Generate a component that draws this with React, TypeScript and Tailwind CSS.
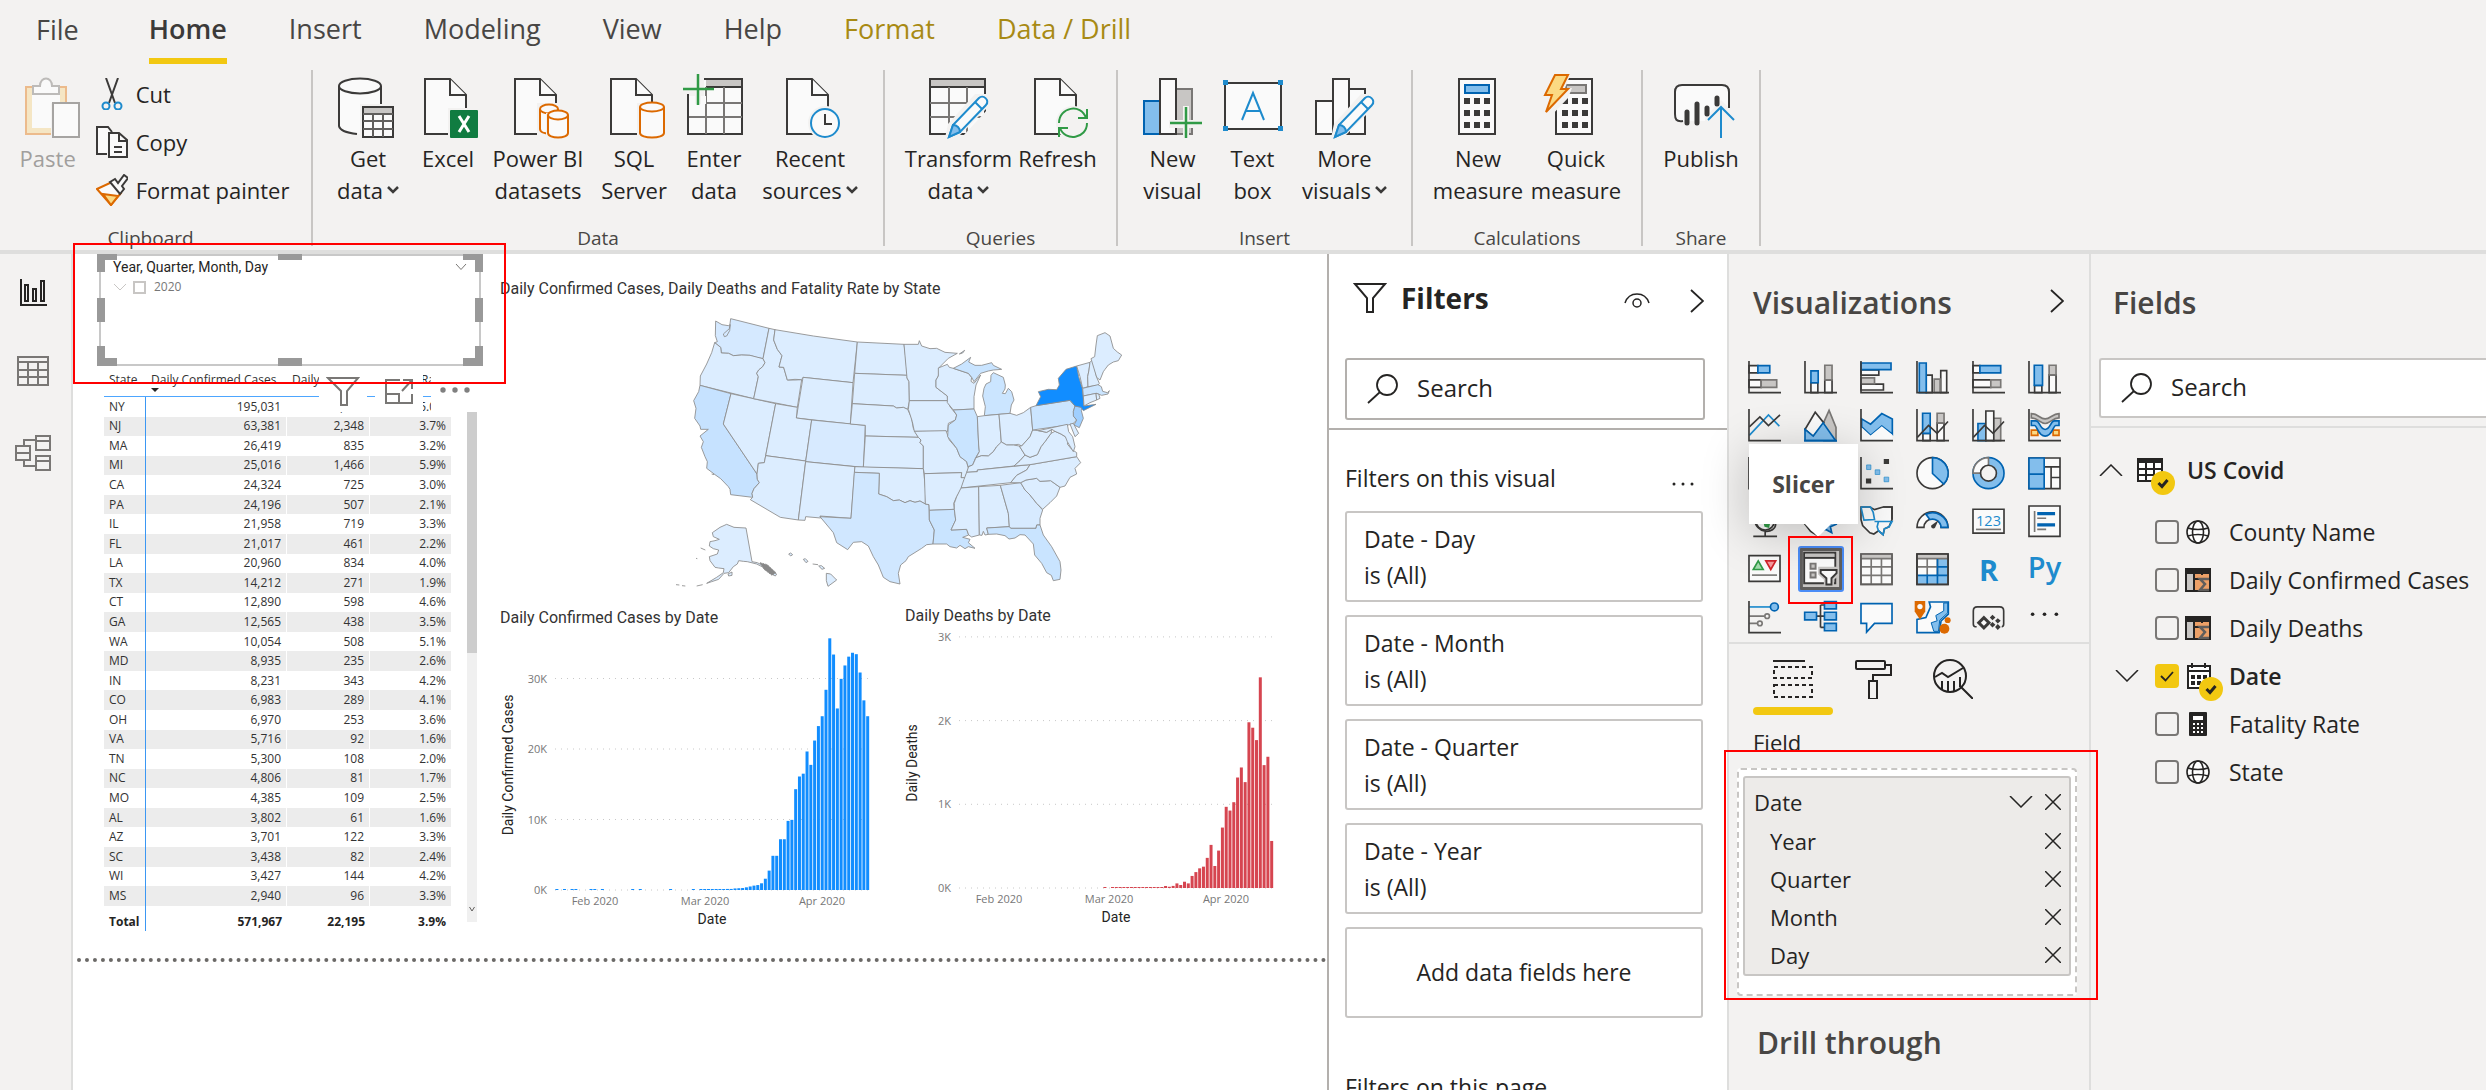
import { type ReactNode } from "react";

const DARK = "#3b3a39";
const PAPER = "#fafafa";
const GREY = "#797775";
const SILVER = "#c8c6c4";
const BLUE = "#0063b1";
const SKY = "#83beec";
const AZURE = "#1e8bcd";
const ORANGE = "#dc6900";
const GREEN = "#309a46";

/* ---------- ribbon icons, drawn on a 60 x 60 grid ---------- */

function Big({ children }: { children: ReactNode }) {
  return (
    <svg viewBox="0 0 60 60" className="size-[60px] shrink-0 overflow-visible" fill="none" strokeWidth="2" aria-hidden="true">
      {children}
    </svg>
  );
}

const Page = () => (
  <g fill={PAPER} stroke={DARK}>
    <path d="M7 1H32L48 17V56H7Z" />
    <path d="M32 1V17H48" />
  </g>
);

const PasteIcon = () => (
  <Big>
    <path d="M4 9H44V56H4Z" fill="#f5e6c4" stroke="#ecbb8c" />
    <path d="M10 14H38V50H10Z" fill={PAPER} />
    <path d="M11 16V8H18C18 -2 30 -2 30 8H37V16Z" fill={PAPER} stroke="#bdbbb9" />
    <path d="M29 25H57V60H29Z" fill="#f3f2f1" />
    <path d="M31 25H57V59H31Z" fill={PAPER} stroke="#a6a4a2" />
  </Big>
);

const GetDataIcon = () => (
  <Big>
    <path d="M1 8V48C1 53 10 56 22 56H42V8" fill={PAPER} />
    <path d="M1 8V48C2 53 10 55 19 56M43 8V26" stroke={DARK} />
    <ellipse cx="22" cy="8" rx="21" ry="7.5" fill={PAPER} stroke={DARK} />
    <path d="M22 26H60V60H22Z" fill="#f3f2f1" />
    <path d="M25 29H55V59H25Z" fill={PAPER} stroke={DARK} />
    <path d="M26 30H54V35H26Z" fill={SILVER} />
    <path d="M25 36H55M25 43H55M25 51H55M35 36V59M45 36V59" stroke="#605e5c" />
  </Big>
);

const ExcelIcon = () => (
  <Big>
    <Page />
    <path d="M30 30H60V60H30Z" fill="#f3f2f1" />
    <rect x="32" y="32" width="28" height="28" rx="1" fill="#107c41" />
    <path d="M41 38L51 54M51 38L41 54" stroke="#fff" strokeWidth="3" />
  </Big>
);

const Drum = ({ x, y, w, h }: { x: number; y: number; w: number; h: number }) => (
  <g fill={PAPER} stroke={ORANGE}>
    <path d={`M${x} ${y}V${y + h}C${x} ${y + h + 6} ${x + w} ${y + h + 6} ${x + w} ${y + h}V${y}`} />
    <ellipse cx={x + w / 2} cy={y} rx={w / 2} ry="4.5" />
  </g>
);

const DatasetsIcon = () => (
  <Big>
    <Page />
    <path d="M29 25H50V30H62V62H29Z" fill="#f3f2f1" />
    <Drum x={32} y={31} w={18} h={20} />
    <path d="M38 35H44V62H38Z" fill="#f3f2f1" />
    <Drum x={40} y={37} w={20} h={18} />
  </Big>
);

const SqlIcon = () => (
  <Big>
    <Page />
    <path d="M33 25H60V62H33Z" fill="#f3f2f1" />
    <Drum x={36} y={29} w={24} h={26} />
  </Big>
);

const EnterDataIcon = () => (
  <Big>
    <path d="M4 1H58V56H4Z" fill={PAPER} stroke={DARK} />
    <path d="M22 2H57V9H22Z" fill={SILVER} />
    <path d="M22 9H58" stroke={DARK} />
    <path d="M4 25H58M4 39H58M22 9V56M40 9V56" stroke={GREY} />
    <path d="M0 -4H20V26H0Z" fill="#f3f2f1" />
    <path d="M5 18H11V26H5ZM17 18H22V26H17Z" fill={PAPER} />
    <path d="M4 16V56" stroke={DARK} />
    <path d="M14 -4V27M-1 11H30" stroke={GREEN} strokeWidth="2.5" />
  </Big>
);

const RecentIcon = () => (
  <Big>
    <Page />
    <circle cx="45" cy="45" r="17" fill="#f3f2f1" />
    <circle cx="45" cy="45" r="14" fill={PAPER} stroke={AZURE} />
    <path d="M45 36V46H52" stroke={DARK} />
  </Big>
);

const Pencil = () => (
  <g>
    <path d="M16 60L19 46L46 16L60 16V28L30 58Z" fill="#f3f2f1" />
    <path d="M20 59L24 47L50 20C54 16 61 22 57 27L31 54Z" fill={PAPER} stroke={AZURE} />
    <path d="M20 59L24 47C28 47 31 50 31 54Z" fill={SKY} stroke={AZURE} />
    <path d="M46 24L53 31" stroke={AZURE} />
  </g>
);

const TransformIcon = () => (
  <Big>
    <path d="M1 1H56V56H1Z" fill={PAPER} stroke={DARK} />
    <path d="M2 2H55V8H2Z" fill={SILVER} />
    <path d="M1 9H56" stroke={DARK} />
    <path d="M1 25H56M1 39H56M20 9V56M38 9V56" stroke={GREY} />
    <path d="M34 58L58 32V58Z" fill="#f3f2f1" />
    <Pencil />
  </Big>
);

const RefreshIcon = () => (
  <Big>
    <Page />
    <circle cx="45" cy="45" r="17" fill="#f3f2f1" />
    <path d="M31 45C31 29 53 25 58 40M59 31V40H50M59 45C59 61 37 64 32 50M31 59V50H40" stroke={GREEN} />
  </Big>
);

const NewVisualIcon = () => (
  <Big>
    <path d="M33 11H49V56H33Z" fill={SILVER} stroke={GREY} />
    <path d="M1 23H17V56H1Z" fill={SKY} stroke={BLUE} />
    <path d="M17 1H33V56H17Z" fill={PAPER} stroke={DARK} />
    <path d="M26 42H40V28H46V42H60V50H46V60H40V50H26Z" fill="#f3f2f1" />
    <path d="M43 29V60M27 45H59" stroke={GREEN} strokeWidth="2.5" />
  </Big>
);

const TextBoxIcon = () => (
  <Big>
    <path d="M2 5H58V51H2Z" fill={PAPER} stroke={DARK} />
    <path d="M0 2H5V7H0ZM55 2H60V7H55ZM0 48H5V53H0ZM55 48H60V53H55Z" fill={AZURE} />
    <path d="M19 42L30 15L41 42M23 33H37" stroke={AZURE} />
  </Big>
);

const MoreVisualsIcon = () => (
  <Big>
    <path d="M34 11H50V56H34Z" fill={PAPER} stroke={DARK} />
    <path d="M1 23H18V56H1Z" fill={PAPER} stroke={DARK} />
    <path d="M18 1H34V56H18Z" fill={PAPER} stroke={DARK} />
    <Pencil />
  </Big>
);

const Keys = ({ x }: { x: number }) => (
  <g fill={DARK}>
    {[20, 32, 44].map((y) =>
      [0, 10, 20].map((dx) => <rect key={`${y}-${dx}`} x={x + dx} y={y} width="6" height="6" />),
    )}
  </g>
);

const NewMeasureIcon = () => (
  <Big>
    <path d="M11 1H47V56H11Z" fill={PAPER} stroke={DARK} />
    <path d="M17 7H41V15H17Z" fill={SKY} stroke={BLUE} />
    <Keys x={16} />
  </Big>
);

const QuickMeasureIcon = () => (
  <Big>
    <path d="M10 1H46V56H10Z" fill={PAPER} stroke={DARK} />
    <path d="M20 7H40V15H20Z" fill={SILVER} stroke={GREY} />
    <Keys x={16} />
    <path d="M1 -5H25L19 10H26L22 20L5 38H-3Z" fill="#f3f2f1" />
    <path d="M9 -3H22L15 11H22L0 34L6 17H-1Z" fill="#fbd983" stroke={ORANGE} />
  </Big>
);

const PublishIcon = () => (
  <Big>
    <path d="M12 43C5 44 4 41 4 36V14C4 9 6 7 11 7H51C56 7 58 9 58 14V30L50 22L34 40V43Z" fill={PAPER} />
    <path d="M12 43C5 44 4 41 4 36V14C4 9 6 7 11 7H51C56 7 58 9 58 14V30" stroke={DARK} />
    <path d="M16 34V45M26 26V45M36 30V36M46 20V26" stroke={DARK} strokeWidth="5" strokeLinecap="round" />
    <path d="M50 60V29M37 42L50 29L63 42" stroke={AZURE} />
  </Big>
);

const Small = ({ children }: { children: ReactNode }) => (
  <svg viewBox="0 0 32 32" className="size-8 shrink-0" fill="none" strokeWidth="2" aria-hidden="true">
    {children}
  </svg>
);

const CutIcon = () => (
  <Small>
    <path d="M10 0L19 25M22 0L13 25" stroke={DARK} />
    <circle cx="10" cy="28" r="3.5" stroke={AZURE} />
    <circle cx="22" cy="28" r="3.5" stroke={AZURE} />
  </Small>
);

const CopyIcon = () => (
  <Small>
    <path d="M11 28H1V1H12L16 6" fill={PAPER} stroke={DARK} />
    <path d="M13 7H23L31 14V31H13Z" fill={PAPER} stroke={DARK} />
    <path d="M23 7V15H31M18 21H26M18 26H26" stroke={DARK} />
  </Small>
);

const PainterIcon = () => (
  <Small>
    <path d="M1 15L16 8L25 19L15 31Z" fill={PAPER} stroke={ORANGE} />
    <path d="M7 20L22 22L15 31Z" fill="#fbd983" stroke={ORANGE} />
    <path d="M14 8L19 5L22 9L28 1L32 4L26 12L28 15L24 20Z" fill={PAPER} stroke={DARK} />
  </Small>
);

function Caret() {
  return (
    <svg viewBox="0 0 12 8" className="h-2 w-3 shrink-0" fill="none" stroke={DARK} strokeWidth="2.5" aria-hidden="true">
      <path d="M1 1L6 6L11 1" />
    </svg>
  );
}

function BigButton({ icon, top, bottom, menu, width }: { icon: ReactNode; top: string; bottom?: string; menu?: boolean; width: string }) {
  return (
    <button type="button" className={`flex shrink-0 flex-col items-center ${width}`}>
      {icon}
      <span className="mt-1 block whitespace-nowrap">{top}</span>
      {bottom && (
        <span className="flex items-center gap-1 whitespace-nowrap">
          {bottom}
          {menu && <Caret />}
        </span>
      )}
    </button>
  );
}

function Group({ label, width, pad = "", children }: { label: string; width: string; pad?: string; children: ReactNode }) {
  return (
    <section className={`flex h-44 shrink-0 flex-col border-r-2 border-[#c8c6c4] pt-2 ${width}`}>
      <div className={`flex h-[146px] shrink-0 justify-center text-[22px] leading-8 ${pad}`}>{children}</div>
      <h2 className={`text-center text-[19px] leading-7 text-[#484644] ${label === "Clipboard" ? "pr-2.5" : ""}`}>{label}</h2>
    </section>
  );
}

const tabs = ["Insert", "Modeling", "View", "Help"];

function Ribbon() {
  return (
    <header className="h-[254px] shrink-0 border-b-4 border-[#dededd] bg-[#f3f2f1]">
      <nav className="flex h-16 gap-[62px] pl-9 text-[27px] leading-9 text-[#484644]">
        <button type="button" className="mr-2 flex flex-col pt-3">File</button>
        <button type="button" className="flex flex-col justify-between border-b-[6px] border-[#f2c811] pt-[11px] font-semibold text-[#3b3a39]">Home</button>
        {tabs.map((t) => (
          <button type="button" key={t} className="flex flex-col pt-[11px]">{t}</button>
        ))}
        <button type="button" className="flex flex-col pt-[11px] text-[#a88a14]">Format</button>
        <button type="button" className="flex flex-col pt-[11px] whitespace-nowrap text-[#a88a14]">Data / Drill</button>
      </nav>
      <div className="mt-1.5 flex">
        <Group label="Clipboard" width="w-[313px]" pad="pl-1.5">
          <button type="button" className="flex flex-col items-center pr-3 text-[#a19f9d]">
            <PasteIcon />
            <span className="mt-1 block pr-2">Paste</span>
          </button>
          <div className="flex flex-col gap-4 pr-2">
            <button type="button" className="flex items-center gap-2"><CutIcon />Cut</button>
            <button type="button" className="flex items-center gap-2"><CopyIcon />Copy</button>
            <button type="button" className="flex items-center gap-2 whitespace-nowrap"><PainterIcon />Format painter</button>
          </div>
        </Group>
        <Group label="Data" width="w-[572px]" pad="pl-1">
          <BigButton icon={<GetDataIcon />} top="Get" bottom="data" menu width="w-20" />
          <BigButton icon={<ExcelIcon />} top="Excel" width="w-20" />
          <BigButton icon={<DatasetsIcon />} top="Power BI" bottom="datasets" width="w-[100px]" />
          <BigButton icon={<SqlIcon />} top="SQL" bottom="Server" width="w-[92px]" />
          <BigButton icon={<EnterDataIcon />} top="Enter" bottom="data" width="w-[68px]" />
          <BigButton icon={<RecentIcon />} top="Recent" bottom="sources" menu width="w-[124px]" />
        </Group>
        <Group label="Queries" width="w-[233px]">
          <BigButton icon={<TransformIcon />} top="Transform" bottom="data" menu width="w-[114px]" />
          <BigButton icon={<RefreshIcon />} top="Refresh" width="w-[84px]" />
        </Group>
        <Group label="Insert" width="w-[295px]">
          <BigButton icon={<NewVisualIcon />} top="New" bottom="visual" width="w-[68px]" />
          <BigButton icon={<TextBoxIcon />} top="Text" bottom="box" width="w-[92px]" />
          <BigButton icon={<MoreVisualsIcon />} top="More" bottom="visuals" menu width="w-[92px]" />
        </Group>
        <Group label="Calculations" width="w-[230px]">
          <BigButton icon={<NewMeasureIcon />} top="New" bottom="measure" width="w-[98px]" />
          <BigButton icon={<QuickMeasureIcon />} top="Quick" bottom="measure" width="w-[98px]" />
        </Group>
        <Group label="Share" width="w-[118px]">
          <BigButton icon={<PublishIcon />} top="Publish" width="w-[100px]" />
        </Group>
      </div>
    </header>
  );
}

/* ---------- left rail ---------- */

function Rail() {
  return (
    <nav className="flex w-[73px] shrink-0 flex-col items-center gap-11 border-r-2 border-[#dededd] bg-[#f3f2f1] pt-[21px] pr-1.5">
      <button type="button" aria-label="Report view">
        <svg viewBox="0 0 36 36" className="size-9" fill="none" stroke="#252423" strokeWidth="2">
          <path d="M6 4V30H32M10 10H13V26H10ZM18 14H21V26H18ZM26 6H29V26H26Z" />
        </svg>
      </button>
      <button type="button" aria-label="Data view">
        <svg viewBox="0 0 36 36" className="size-9" fill="none" stroke={GREY} strokeWidth="2">
          <path d="M3 2H33V30H3ZM3 7H33M3 15H33M3 22H33M13 7V30M23 7V30" />
        </svg>
      </button>
      <button type="button" aria-label="Model view">
        <svg viewBox="0 0 36 36" className="size-9" fill="none" stroke={GREY} strokeWidth="2">
          <path d="M21 1H35V15H21ZM21 6H35M21 21H35V35H21ZM21 26H35M1 11H15V25H1ZM1 18H15M9 11V5H21M9 25V31H21" />
        </svg>
      </button>
    </nav>
  );
}

/* ---------- report canvas ---------- */

function Slicer() {
  const thick = "absolute bg-[#999999]";
  return (
    <section className="relative h-28 w-[386px] px-0.5">
      <div className="h-28 border-2 border-[#c8c8c8] pt-[3px] pr-3 pl-3">
        <div className="flex items-center justify-between">
          <h3 className="font-['Roboto',sans-serif] text-[14px] leading-4 text-[#252423]">Year, Quarter, Month, Day</h3>
          <svg viewBox="0 0 12 8" className="h-2 w-3" fill="none" stroke={GREY} aria-hidden="true"><path d="M1 1L6 6.500L11 1" /></svg>
        </div>
        <div className="mt-0.5 flex items-center text-[12px] leading-5 text-[#777777]">
          <svg viewBox="0 0 14 8" className="mr-1.5 h-2 w-3.5" fill="none" stroke="#c8c6c4" aria-hidden="true"><path d="M1 1L7 7L13 1" /></svg>
          <label className="flex items-center gap-2">
            <input type="checkbox" className="size-[13px] appearance-none border-2 border-[#c8c6c4]" />
            2020
          </label>
        </div>
      </div>
      <span className={`${thick} top-0 left-0 h-[18px] w-2`} /><span className={`${thick} top-0 left-0 h-1.5 w-5`} />
      <span className={`${thick} top-0 right-0 h-[18px] w-2`} /><span className={`${thick} top-0 right-0 h-1.5 w-5`} />
      <span className={`${thick} bottom-0 left-0 h-5 w-2`} /><span className={`${thick} bottom-0 left-0 h-2 w-5`} />
      <span className={`${thick} right-0 bottom-0 h-5 w-2`} /><span className={`${thick} right-0 bottom-0 h-2 w-5`} />
      <span className={`${thick} top-0 left-1/2 h-1.5 w-6 -translate-x-1/2`} />
      <span className={`${thick} bottom-0 left-1/2 h-2 w-6 -translate-x-1/2`} />
      <span className={`${thick} top-11 left-0 h-6 w-2`} />
      <span className={`${thick} top-11 right-0 h-6 w-2`} />
    </section>
  );
}

const rows: [string, string, string, string][] = [
  ["NY", "195,031", "9,752", "5.0%"],
  ["NJ", "63,381", "2,348", "3.7%"],
  ["MA", "26,419", "835", "3.2%"],
  ["MI", "25,016", "1,466", "5.9%"],
  ["CA", "24,324", "725", "3.0%"],
  ["PA", "24,196", "507", "2.1%"],
  ["IL", "21,958", "719", "3.3%"],
  ["FL", "21,017", "461", "2.2%"],
  ["LA", "20,960", "834", "4.0%"],
  ["TX", "14,212", "271", "1.9%"],
  ["CT", "12,890", "598", "4.6%"],
  ["GA", "12,565", "438", "3.5%"],
  ["WA", "10,054", "508", "5.1%"],
  ["MD", "8,935", "235", "2.6%"],
  ["IN", "8,231", "343", "4.2%"],
  ["CO", "6,983", "289", "4.1%"],
  ["OH", "6,970", "253", "3.6%"],
  ["VA", "5,716", "92", "1.6%"],
  ["TN", "5,300", "108", "2.0%"],
  ["NC", "4,806", "81", "1.7%"],
  ["MO", "4,385", "109", "2.5%"],
  ["AL", "3,802", "61", "1.6%"],
  ["AZ", "3,701", "122", "3.3%"],
  ["SC", "3,438", "82", "2.4%"],
  ["WI", "3,427", "144", "4.2%"],
  ["MS", "2,940", "96", "3.3%"],
];

function StateTable() {
  return (
    <section className="relative ml-[7px] flex w-[373px]">
      <table className="h-[565px] w-[347px] table-fixed border-separate border-spacing-0 text-right text-[12px] leading-3 text-[#333333]">
        <colgroup>
          <col className="w-[42px]" />
          <col className="w-[141px]" />
          <col className="w-[83px]" />
          <col className="w-[81px]" />
        </colgroup>
        <thead>
          <tr className="h-[31px] align-top text-left">
            <th scope="col" className="border-b border-[#4da6ff] pt-2 pl-[5px] font-normal">State</th>
            <th scope="col" aria-sort="descending" className="border-b border-[#4da6ff] pt-2 pl-[5px] font-normal whitespace-nowrap">
              Daily Confirmed Cases
              <svg viewBox="0 0 8 4" className="mt-0.5 h-1 w-2" fill="#252423" aria-hidden="true"><path d="M0 0H8L4 4Z" /></svg>
            </th>
            <th scope="col" className="border-b border-[#4da6ff] pt-2 pl-[5px] font-normal whitespace-nowrap">Daily Deaths</th>
            <th scope="col" className="border-b border-[#4da6ff] pt-2 pr-[5px] text-right font-normal whitespace-nowrap">Rate</th>
          </tr>
        </thead>
        <tbody>
          {rows.map(([state, cases, deaths, rate]) => (
            <tr key={state} className="even:bg-[#ececec]">
              <td className="border-r border-[#3b97f3] pl-[5px] text-left">{state}</td>
              <td className="border-r border-white pr-[5px]">{cases}</td>
              <td className="border-r border-white pr-[5px]">{deaths}</td>
              <td className="pr-[5px]">{rate}</td>
            </tr>
          ))}
        </tbody>
        <tfoot>
          <tr className="h-[25px] font-bold text-[#252423]">
            <td className="border-r border-[#3b97f3] pt-1.5 pl-[5px] text-left">Total</td>
            <td className="pt-1.5 pr-[5px]">571,967</td>
            <td className="pt-1.5 pr-[5px]">22,195</td>
            <td className="pt-1.5 pr-[5px]">3.9%</td>
          </tr>
        </tfoot>
      </table>
      <div className="mt-[46px] ml-4 flex h-[510px] w-2.5 flex-col justify-between bg-[#f0f0f0]">
        <span className="h-[241px] bg-[#cdcdcd]" />
        <svg viewBox="0 0 10 24" className="h-6 w-2.5" fill="none" stroke="#605e5c" aria-hidden="true"><path d="M2.500 9L5 13L7.500 9" /></svg>
      </div>
      <div className="absolute top-2 left-[215px] flex h-[38px] w-[164px] items-center">
        <button type="button" aria-label="Filters" className="mr-2 flex h-full w-12 items-center justify-center bg-white pb-1">
          <svg viewBox="0 0 34 30" className="h-[30px] w-[34px]" fill="none" stroke={GREY} strokeWidth="2"><path d="M2 2H32L21 15V29H15V15Z" /></svg>
        </button>
        <button type="button" aria-label="Focus mode" className="mr-2 flex h-full w-12 items-center justify-center bg-white pb-1">
          <svg viewBox="0 0 30 28" className="h-7 w-[30px]" fill="none" stroke={GREY} strokeWidth="2"><path d="M16 3H2V26H28V17M2 17H15V26M18 14L28 3M19 3H28V12" /></svg>
        </button>
        <button type="button" aria-label="More options" className="flex h-full flex-1 items-center justify-center bg-white pr-1 pb-1.5">
          <svg viewBox="0 0 32 6" className="h-1.5 w-8" fill="#808080"><circle cx="4" cy="3" r="2.7" /><circle cx="16" cy="3" r="2.7" /><circle cx="28" cy="3" r="2.7" /></svg>
        </button>
      </div>
    </section>
  );
}

const P = "#dcedff";
const states: [string, string][] = [
  ["#d5e9ff", "M167 93L186 104L205 107L211 104L209 122L200 138L193 140L190 132L208 116L212 86L327 115L309 206L290 202L270 196L245 195L220 197L206 190L184 189L182 172L164 158L172 155L166 137Z"],
  [P, "M164 158L182 172L184 189L206 190L220 197L245 195L270 196L309 206L315 218L308 230L296 240L290 250L295 260L281 326L120 286L121 258L140 222L155 188Z"],
  ["#c6e2ff", "M120 286L213 311L190 402L291 552L292 568L298 578L282 596L276 610L278 622L212 614L210 598L205 590L182 566L165 554L140 535L142 515L135 500L124 472L130 455L120 438L145 418L122 418L120 408L104 385L108 355L101 332L116 305Z"],
  [P, "M213 311L347 341L317 497L313 518L295 520L291 552L190 402Z"],
  [P, "M327 115L345 119L341 150L352 178L366 197L362 212L357 231L371 232L382 270L405 270L425 269L412 352L281 326L295 260L290 250L296 240L308 230L315 218L309 206Z"],
  [P, "M345 119L460 138L592 156L579 278L429 262L425 269L405 268L382 270L371 232L357 231L362 212L366 197L352 178L341 150Z"],
  [P, "M429 262L579 278L571 402L409 384Z"],
  [P, "M347 341L412 352L409 384L455 390L437 513L317 497Z"],
  ["#d7eaff", "M455 390L616 406L610 532L437 515Z"],
  [P, "M317 497L437 513L415 690L361 682L271 629L278 622L276 610L282 596L298 578L292 568L291 552L295 520L313 518Z"],
  [P, "M437 515L585 530L573 685L480 678L482 684L437 680L435 691L415 690Z"],
  [P, "M592 156L732 163L737 200L742 256L584 250Z"],
  [P, "M584 250L742 256L741 264L747 275L748 335L743 358L730 352L710 354L700 348L577 341Z"],
  [P, "M577 341L700 348L710 354L730 352L743 358L754 382L760 415L775 442L616 438L616 406L571 402Z"],
  [P, "M616 438L775 442L783 450L780 458L790 468L790 536L610 532Z"],
  [P, "M585 530L790 536L797 600L796 642L780 633L765 637L750 632L735 638L718 630L700 632L680 620L656 612L658 550L583 547Z"],
  ["#d0e7ff", "M583 547L658 550L656 612L680 620L700 632L718 630L735 638L750 632L765 637L780 633L796 642L807 644L808 690L823 720L819 762L800 764L785 775L745 800L738 812L722 825L715 850L720 882L690 875L670 862L655 825L640 800L625 768L605 755L580 757L563 779L530 758L520 728L480 680L573 685Z"],
  [P, "M732 163L775 163L778 152L785 168L810 176L830 175L855 187L892 190L865 205L838 232L835 258L828 270L828 292L845 305L862 318L863 332L748 332L747 275L741 264Z"],
  [P, "M748 332L863 332L870 350L890 375L886 390L865 400L863 424L763 424L757 395L745 358Z"],
  [P, "M763 424L858 422L868 450L890 475L900 500L920 515L925 535L915 565L903 563L905 548L793 551L790 536L790 468L780 458L783 450L775 442Z"],
  [P, "M793 551L905 548L903 563L915 563L908 590L890 620L881 640L883 658L808 661L807 644L796 642Z"],
  ["#c9e4ff", "M808 661L883 658L887 690L873 720L920 718L926 735L908 742L930 748L925 758L945 775L925 770L915 776L900 766L890 774L870 770L860 762L819 762L823 720L808 690Z"],
  [P, "M835 234L862 223L868 232L880 235L925 250L935 262L933 274L942 280L962 255L948 285L942 320L942 357L880 360L862 338L862 318L828 292L828 270L835 258Z"],
  ["#c9e4ff", "M880 360L942 357L952 380L956 465L958 485L946 505L938 525L924 530L920 515L900 500L890 475L863 440L865 405L886 390L890 375Z"],
  ["#c9e4ff", "M880 235L905 222L932 202L926 216L945 226L965 226L995 218L1000 226L1025 238L1000 240L985 243L962 250L942 275L935 262L925 250ZM898 192L914 181L908 189Z"],
  ["#cbe5ff", "M1000 248L1030 262L1036 285L1035 297L1027 310L1036 311L1045 295L1055 305L1062 330L1054 345L1050 370L1017 373L973 377L976 350L968 318L972 295L978 282L992 275L993 256Z"],
  [P, "M952 380L973 377L1017 373L1024 458L1010 470L1000 485L985 498L965 497L948 503L958 485L956 465Z"],
  [P, "M1017 373L1050 370L1070 376L1090 368L1112 352L1118 420L1110 440L1085 468L1075 463L1060 465L1040 465L1024 456Z"],
  [P, "M1024 456L1040 465L1060 465L1078 468L1095 495L1080 512L1062 528L952 540L952 545L920 547L926 530L938 525L948 503L965 497L985 498L1000 485L1010 470Z"],
  [P, "M920 547L952 545L952 540L1110 524L1100 540L1070 556L1052 578L903 594L912 568Z"],
  [P, "M903 594L956 590L958 735L935 741L926 735L920 718L873 720L887 690L883 658L883 640L890 620Z"],
  [P, "M956 590L1021 586L1045 670L1048 710L980 714L985 733L975 735L970 724L966 736L958 735Z"],
  ["#d7eaff", "M1021 586L1082 578L1095 600L1110 615L1130 640L1148 660L1140 685L1140 705L1130 705L1128 715L1052 715L1048 710L1045 670Z"],
  ["#c9e4ff", "M980 714L1048 710L1052 715L1128 715L1130 705L1140 705L1150 735L1175 770L1200 815L1203 840L1200 868L1180 872L1174 856L1160 848L1145 820L1124 795L1120 762L1095 735L1080 734L1065 744L1047 747L1035 737L1010 732L985 733Z"],
  [P, "M1082 578L1098 570L1130 565L1140 574L1172 572L1200 592L1190 618L1170 638L1148 658L1130 640L1110 615L1095 600Z"],
  [P, "M1110 524L1250 500L1262 518L1245 535L1250 552L1230 562L1215 588L1200 592L1172 572L1140 574L1130 565L1098 570L1082 578L1052 578L1070 556L1100 540Z"],
  [P, "M1062 528L1080 512L1095 495L1110 502L1132 494L1143 470L1155 455L1173 430L1185 424L1203 432L1218 442L1225 452L1222 462L1235 478L1250 488L1250 500L1110 524Z"],
  [P, "M1118 420L1135 422L1160 427L1176 418L1173 430L1155 455L1143 470L1132 494L1110 502L1095 495L1078 468L1085 468L1110 440Z"],
  ["#cbe5ff", "M1112 352L1128 347L1230 331L1245 348L1240 365L1242 380L1250 390L1237 403L1118 420Z"],
  [P, "M1135 422L1222 403L1226 425L1238 440L1245 470L1240 485L1222 455L1216 440L1203 432L1185 424L1176 418L1160 427Z"],
  [P, "M1230 402L1240 400L1256 430L1245 440Z"],
  ["#a0cfff", "M1245 348L1267 352L1264 362L1270 385L1258 413L1242 405L1250 390L1240 378L1240 365Z"],
  ["#118dff", "M1128 347L1142 320L1135 305L1165 298L1190 299L1198 285L1195 265L1218 238L1250 228L1256 260L1267 295L1272 348L1308 343L1270 362L1263 352L1245 348L1230 331Z"],
  [P, "M1250 228L1290 217L1287 240L1283 260L1284 290L1268 295L1260 260Z"],
  [P, "M1290 217L1298 208L1310 262L1318 280L1314 286L1284 290L1283 260L1287 240Z"],
  [P, "M1293 206L1304 200L1308 165L1312 137L1335 128L1350 138L1360 175L1372 186L1385 195L1375 212L1360 216L1345 225L1335 238L1330 245L1320 270L1310 262Z"],
  ["#cbe5ff", "M1268 295L1314 284L1324 290L1328 304L1342 308L1348 302L1344 312L1325 316L1310 310L1270 318Z"],
  [P, "M1270 318L1308 310L1310 330L1290 338L1272 348Z"],
  [P, "M1308 310L1316 312L1320 325L1310 330Z"],
  [P, "M200 703L222 712L258 714L276 815L292 818L312 828L332 842L350 852L346 858L330 850L310 832L290 822L262 815L250 814L236 812L232 822L220 830L206 848L192 850L176 868L155 875L140 880L170 862L190 848L192 836L176 834L165 832L150 812L148 800L172 792L176 780L160 776L148 768L150 755L165 752L178 748L160 740L157 728L180 712Z"],
  [P, "M386 792L392 789L398 794L392 798ZM430 808L436 806L444 814L438 818ZM458 822L474 824M476 828L484 827L494 835L486 838ZM499 850L512 852L530 870L504 889L499 872ZM204 852L216 846L216 856L206 858ZM122 774L136 780M108 805L112 806M48 884L58 885M66 887L76 888M110 888L128 884M155 552L162 554"],
];

function UsMap() {
  return (
    <svg viewBox="0 60 1440 870" className="mt-[9px] ml-[170px] h-[290px] w-[480px]" stroke="#8c8c8c" strokeWidth="2.600" strokeLinejoin="round" role="img" aria-label="Map of the United States by state">
      {states.map(([fill, d]) => (
        <path key={d} d={d} fill={fill} />
      ))}
      <path d="M300 818L322 824L348 848L336 856L312 838Z" fill="#888888" strokeDasharray="5 3" />
    </svg>
  );
}

const caseDays: [number, number[]][] = [
  [0, [0.1]], [2, [0.1]], [4, [0.1, 0.1]], [9, [0.1, 0.1]], [12, [0.1]], [20, [0.1]], [22, [0.1]], [30, [0.1]], [36, [0.1]],
  [38, [0.1, 0.1, 0.1, 0.1, 0.1, 0.12, 0.12, 0.15, 0.15, 0.22, 0.25, 0.28, 0.38, 0.5, 0.62, 0.7, 0.95, 1.6, 2.75, 4.85, 4.85, 7.2, 7.2, 9.8, 9.95, 14.3, 16.1, 16.5, 19.65, 17.75, 21.2, 23.25, 24.65, 28.4, 35.7, 33.4, 25.75, 29.95, 31.85, 33.1, 33.65, 33.45, 30.85, 26.9, 24.65]],
];

const deathDays: [number, number[]][] = [
  [38, [0.01]],
  [40, [0.01, 0.01, 0.01, 0.01, 0.01, 0.01, 0.01, 0.01, 0.01, 0.01, 0.01, 0.01, 0.01, 0.01, 0.024, 0.015, 0.025, 0.055, 0.036, 0.075, 0.055, 0.144, 0.19, 0.235, 0.255, 0.36, 0.515, 0.263, 0.447, 0.722, 0.97, 0.925, 1.025, 1.32, 1.44, 1.265, 1.98, 1.915, 1.767, 2.517, 1.468, 1.568, 0.562]],
];

interface ChartProps {
  title: string;
  yTitle: string;
  color: string;
  data: [number, number[]][];
  ticks: number[];
  scale: number;
  base: number;
  left: number;
  head: string;
  box: string;
}

function BarChart({ title, yTitle, color, data, ticks, scale, base, left, head, box }: ChartProps) {
  return (
    <figure className={box}>
      <figcaption className={`font-['Roboto',sans-serif] text-[16px] leading-6 text-[#333333] ${head}`}>{title}</figcaption>
      <svg viewBox="0 0 400 310" className="h-[310px] w-[400px]" role="img" aria-label={title}>
        {ticks.map((t) => (
          <g key={t}>
            <path d={`M${left} ${base - t * scale}H${left + 314}`} stroke="#c8c8c8" strokeDasharray="1 5" />
            <text x={left - 8} y={base - t * scale + 4} textAnchor="end" fontSize="11" fill="#777777">{`${t}K`}</text>
          </g>
        ))}
        {data.flatMap(([start, values]) =>
          values.map((v, i) => (
            <rect key={start + i} x={left + 0.4 + (start + i) * 3.79} y={base - Math.max(v * scale, 1)} width="3" height={Math.max(v * scale, 1)} fill={color} />
          )),
        )}
        <g fontSize="11" fill="#777777" textAnchor="middle">
          <text x={left + 40} y={base + 15}>Feb 2020</text>
          <text x={left + 150} y={base + 15}>Mar 2020</text>
          <text x={left + 267} y={base + 15}>Apr 2020</text>
        </g>
        <g className="font-['Roboto',sans-serif]" fontSize="14" fill="#252423" textAnchor="middle">
          <text x={left + 157} y={base + 34}>Date</text>
          <text transform={`translate(${left - 42} 135) rotate(-90)`}>{yTitle}</text>
        </g>
      </svg>
    </figure>
  );
}

function Canvas() {
  return (
    <main className="relative min-w-0 flex-1 bg-white">
      <div className="flex">
        <div className="w-[417px] shrink-0 pl-6">
          <Slicer />
          <StateTable />
        </div>
        <div className="min-w-0 flex-1 pt-[23px]">
          <h3 className="pl-2.5 font-['Roboto',sans-serif] text-[16px] leading-6 whitespace-nowrap text-[#333333]">
            Daily Confirmed Cases, Daily Deaths and Fatality Rate by State
          </h3>
          <UsMap />
          <div className="mt-1 flex">
            <BarChart title="Daily Confirmed Cases by Date" yTitle="Daily Confirmed Cases" color="#118dff" data={caseDays} ticks={[0, 10, 20, 30]} scale={7.05} base={260} left={65} head="pl-2.5" box="w-[400px] shrink-0 pt-0.5" />
            <BarChart title="Daily Deaths by Date" yTitle="Daily Deaths" color="#d64550" data={deathDays} ticks={[0, 1, 2, 3]} scale={83.7} base={260} left={69} head="pl-[15px]" box="w-[400px] shrink-0" />
          </div>
        </div>
      </div>
      <div className="mt-[18px] ml-1 border-t-4 border-dotted border-[#6b6967]" />
      <div className="pointer-events-none absolute -top-[11px] left-0 h-[141px] w-[433px] border-2 border-[#ff0000]" />
    </main>
  );
}

/* ---------- shared pane parts ---------- */

function SearchBox({ id, frame }: { id: string; frame: string }) {
  return (
    <div className={`flex items-center gap-[18px] border-2 bg-white pl-5 ${frame}`}>
      <svg viewBox="0 0 32 32" className="size-8 shrink-0" fill="none" stroke="#252423" strokeWidth="1.800" aria-hidden="true">
        <circle cx="20" cy="12" r="10" />
        <path d="M13 19L1 30" />
      </svg>
      <input id={id} type="text" aria-label="Search" placeholder="Search" className="min-w-0 flex-1 bg-transparent pb-0.5 text-[24px] leading-8 text-[#252423] outline-none placeholder:text-[#252423]" />
    </div>
  );
}

const ChevronRight = ({ size }: { size: string }) => (
  <svg viewBox="0 0 14 24" className={size} fill="none" stroke="#252423" strokeWidth="1.800" aria-hidden="true"><path d="M1 1L13 12L1 23" /></svg>
);

/* ---------- filters pane ---------- */

function Filters() {
  return (
    <aside className="w-[400px] shrink-0 border-l-2 border-[#b3b0ad] bg-white text-[23px] text-[#252423]">
      <div className="flex h-[104px] items-start pt-6 pr-[23px] pl-6">
        <svg viewBox="0 0 34 32" className="mt-1 mr-[14px] h-8 w-[34px]" fill="none" stroke="#252423" strokeWidth="2" aria-hidden="true"><path d="M2 2H32L20 16V30H14V16Z" /></svg>
        <h2 className="flex-1 text-[28px] leading-10 font-bold">Filters</h2>
        <svg viewBox="0 0 26 18" className="mt-3.5 mr-10 h-[18px] w-[26px]" fill="none" stroke="#252423" strokeWidth="1.500" aria-label="Show filters"><path d="M1 11C5 -1 21 -1 25 11" /><circle cx="13" cy="11" r="4" /></svg>
        <button type="button" aria-label="Collapse" className="mt-[11px]"><ChevronRight size="h-6 w-3.5" /></button>
      </div>
      <SearchBox id="filter-search" frame="ml-4 mr-[22px] h-[62px] rounded-[3px] border-[#b3b0ad]" />
      <div className="mt-2 h-0.5 bg-[#b3b0ad]" />
      <div className="flex flex-col gap-[13px] pr-[24px] pl-4">
        <div className="mt-8 mb-1 flex h-8 items-center justify-between leading-8">
          <h3>Filters on this visual</h3>
          <svg viewBox="0 0 24 4" className="mt-3 mr-2 h-1 w-6" fill="#252423" aria-label="More options"><circle cx="3" cy="2" r="1.500" /><circle cx="12" cy="2" r="1.500" /><circle cx="21" cy="2" r="1.500" /></svg>
        </div>
        {["Day", "Month", "Quarter", "Year"].map((f) => (
          <article key={f} className="h-[91px] rounded-[3px] border-2 border-[#c8c6c4] pt-2 pl-[17px] leading-9">
            <p>Date - {f}</p>
            <p>is (All)</p>
          </article>
        ))}
        <div className="flex h-[91px] items-center justify-center rounded-[3px] border-2 border-[#c8c6c4]">Add data fields here</div>
        <h3 className="mt-10 leading-8 whitespace-nowrap">Filters on this page</h3>
      </div>
    </aside>
  );
}

/* ---------- visualizations pane; gallery icons use a 100-unit grid ---------- */

function V({ children }: { children: ReactNode }) {
  return (
    <svg viewBox="0 0 100 100" className="size-[33px] overflow-visible" fill="none" strokeWidth="5" aria-hidden="true">
      {children}
    </svg>
  );
}

const Axis = () => <path d="M3 0V96H100" stroke={DARK} />;
const w = { fill: PAPER, stroke: DARK };
const b = { fill: SKY, stroke: BLUE };
const g = { fill: SILVER, stroke: GREY };

const gallery: { name: string; icon: ReactNode }[] = [
  { name: "Stacked bar chart", icon: <V><path d="M3 14H30V36H3ZM3 57H40V80H3Z" {...w} /><path d="M30 14H66V36H30Z" {...b} /><path d="M40 57H87V80H40Z" {...g} /><Axis /></V> },
  { name: "Stacked column chart", icon: <V><path d="M21 66H42V96H21ZM63 57H85V96H63Z" {...w} /><path d="M21 30H43V66H21Z" {...b} /><path d="M63 13H85V57H63Z" {...g} /><Axis /></V> },
  { name: "Clustered bar chart", icon: <V><path d="M3 27H57V43H3ZM3 70H71V88H3Z" {...w} /><path d="M3 6H94V26H3Z" {...b} /><path d="M3 51H44V69H3Z" {...g} /><Axis /></V> },
  { name: "Clustered column chart", icon: <V><path d="M31 43H49V96H31ZM75 29H93V96H75Z" {...w} /><path d="M10 6H31V96H10Z" {...b} /><path d="M55 55H73V96H55Z" {...g} /><Axis /></V> },
  { name: "100% stacked bar chart", icon: <V><path d="M3 14H24V36H3ZM3 57H57V80H3Z" {...w} /><path d="M24 14H87V36H24Z" {...b} /><path d="M57 57H87V80H57Z" {...g} /><Axis /></V> },
  { name: "100% stacked column chart", icon: <V><path d="M20 74H42V96H20ZM64 42H85V96H64Z" {...w} /><path d="M19 13H44V74H19Z" {...b} /><path d="M64 13H85V42H64Z" {...g} /><Axis /></V> },

  { name: "Line chart", icon: <V><path d="M4 80L36 46L62 18L95 52" stroke={AZURE} /><path d="M4 54L36 24L62 50L97 18" stroke={DARK} /><Axis /></V> },
  { name: "Area chart", icon: <V><path d="M50 62L76 4L97 56V96H60Z" {...g} /><path d="M3 62L34 10L60 42L28 84Z" {...w} /><path d="M3 62L28 82L58 42L96 96H3Z" {...b} /><path d="M0 96H100" stroke={BLUE} /></V> },
  { name: "Stacked area chart", icon: <V><path d="M5 30L32 46L66 14L98 30V76L66 52L32 80L5 54Z" {...b} /><path d="M5 56L32 80L66 52L98 78V96H5Z" fill={PAPER} /><Axis /></V> },
  { name: "Line and stacked column chart", icon: <V><path d="M21 74H43V96H21ZM64 42H85V96H64Z" {...w} /><path d="M20 13H43V74H20Z" {...b} /><path d="M64 13H85V42H64Z" {...g} /><path d="M4 86L38 50L64 74L97 38" stroke={DARK} /><Axis /></V> },
  { name: "Line and clustered column chart", icon: <V><path d="M64 28H87V96H64Z" {...g} /><path d="M18 44H42V96H18Z" {...b} /><path d="M42 6H66V96H42Z" {...w} /><path d="M4 86L38 50L64 74L97 38" stroke={DARK} /><Axis /></V> },
  { name: "Ribbon chart", icon: <V><path d="M10 64H30V80H10ZM76 64H94V80H76Z" fill="#fbd983" stroke={ORANGE} /><path d="M10 14C30 14 36 30 52 30C68 30 74 14 94 14V27C74 27 68 44 52 44C36 44 30 27 10 27Z" {...g} /><path d="M10 36H24C36 36 36 62 52 62C68 62 68 36 80 36H94V50H84C76 50 74 82 52 82C30 82 28 50 20 50H10Z" {...b} /><Axis /></V> },

  { name: "Waterfall chart", icon: <V><path d="M12 60H30V90H12Z" {...b} /><path d="M50 30H68V60H50Z" {...g} /><Axis /></V> },
  { name: "Funnel", icon: <V><path d="M5 10H95V30H5Z" {...b} /><path d="M20 38H80V58H20Z" {...w} /></V> },
  { name: "Scatter chart", icon: <V><path d="M72 6H88V21H72ZM18 65H34V80H18Z" fill={DARK} /><path d="M20 24H33V38H20ZM46 39H60V53H46ZM73 61H87V75H73Z" fill={SKY} stroke={AZURE} strokeWidth="2" /><Axis /></V> },
  { name: "Pie chart", icon: <V><circle cx="50" cy="49" r="47" {...w} /><path d="M50 2A47 47 0 0 1 84 82L50 50Z" {...b} /></V> },
  { name: "Donut chart", icon: <V><circle cx="50" cy="49" r="47" {...b} /><path d="M50 2A47 47 0 0 0 3 49H26A24 24 0 0 1 50 25Z" fill={PAPER} stroke={GREY} /><circle cx="50" cy="49" r="24" fill="#f3f2f1" stroke={DARK} /></V> },
  { name: "Treemap", icon: <V><path d="M3 3H97V96H3Z" {...w} /><path d="M50 30H97M70 30V96M70 62H97" stroke={DARK} /><path d="M3 3H49V52H3ZM3 52H49V96H3Z" {...b} /></V> },

  { name: "Map", icon: <V><circle cx="52" cy="48" r="28" {...w} /><path d="M44 40H70L64 70L50 66Z" fill={GREEN} /><path d="M20 40C20 90 84 90 84 56M52 80V94M16 95H88" stroke={DARK} /></V> },
  { name: "Filled map", icon: <V><path d="M3 58L20 80L40 92L44 70L30 40Z" {...w} /><path d="M44 92L48 78L66 74L84 84L80 66L98 58V40H60L40 70Z" {...b} /></V> },
  { name: "Shape map", icon: <V><path d="M3 6H30L44 14L70 6H97V44L88 66L74 72L70 90L56 78L42 88L30 84L8 62L3 44Z" {...w} /><path d="M3 6H32L40 22L44 44L12 46L3 6M44 50H97L88 66L74 72L70 90L56 78L52 66L56 50" stroke={AZURE} /><path d="M70 6H97V44" stroke={DARK} /></V> },
  { name: "Gauge", icon: <V><path d="M3 68A47 47 0 0 1 97 68H76A26 26 0 0 0 24 68Z" {...w} /><path d="M30 28A47 47 0 0 1 97 68H76A26 26 0 0 0 42 44Z" {...b} /><path d="M68 46L58 68C54 74 44 70 46 62Z" fill={DARK} /></V> },
  { name: "Card", icon: <V><path d="M3 13H97V85H3Z" {...w} /><path d="M12 74H88" stroke={GREY} /><text x="50" y="65" textAnchor="middle" fontSize="44" fill={AZURE}>123</text></V> },
  { name: "Multi-row card", icon: <V><path d="M3 3H97V95H3Z" {...w} /><path d="M20 18V82M28 40H55M28 74H55" stroke={GREY} /><path d="M28 26H82M28 60H82" stroke={BLUE} strokeWidth="10" /></V> },

  { name: "KPI", icon: <V><path d="M3 8H97V86H3Z" {...w} /><path d="M12 67H88" stroke={GREY} /><path d="M16 50L31 24L46 50Z" fill="#a5dbaf" stroke={GREEN} /><path d="M54 24H84L69 50Z" fill="#f79a9e" stroke="#d1222a" /></V> },
  { name: "Slicer", icon: null },
  { name: "Table", icon: <V><path d="M3 3H97V95H3Z" fill={PAPER} stroke={GREY} /><path d="M5 5H95V16H5Z" fill={SILVER} /><path d="M3 17H97M3 42H97M3 68H97M34 17V95M65 17V95" stroke={GREY} /><path d="M3 95V3H97V95Z" stroke="#605e5c" /></V> },
  { name: "Matrix", icon: <V><path d="M3 3H97V95H3Z" {...w} /><path d="M5 5H95V16H5Z" fill={SILVER} /><path d="M65 18H95V93H5V68H65Z" fill={SKY} /><path d="M3 17H97M3 42H65M34 17V68M65 17V68" stroke={GREY} /><path d="M65 18V95M34 68V95M5 68H97M65 42H97" stroke={BLUE} /><path d="M3 3H97V95H3Z" stroke={DARK} /></V> },
  { name: "R script visual", icon: <span className="flex size-[33px] items-center justify-center text-[29px] leading-8 font-bold text-[#1e8bcd]">R</span> },
  { name: "Python visual", icon: <span className="flex size-[33px] items-start justify-center text-[29px] leading-7 font-semibold text-[#1e8bcd]">Py</span> },

  { name: "Key influencers", icon: <V><path d="M4 18H70" stroke={AZURE} /><circle cx="80" cy="18" r="12" {...b} /><path d="M4 46H50M4 68H28" stroke={GREY} /><circle cx="58" cy="46" r="7" stroke={GREY} /><circle cx="36" cy="68" r="7" stroke={GREY} /><Axis /></V> },
  { name: "Decomposition tree", icon: <V><path d="M38 46H62M50 12V80M50 12H62M50 80H62" stroke={DARK} /><path d="M2 34H38V57H2ZM62 2H98V24H62ZM62 34H98V57H62ZM62 68H98V90H62Z" {...b} /></V> },
  { name: "Q&A", icon: <V><path d="M3 8H97V68H44L20 94V68H3Z" fill={PAPER} stroke={BLUE} /></V> },
  { name: "ArcGIS map", icon: <V><path d="M40 3H98V40L76 60L70 96H3V56L30 50L44 18Z" fill={PAPER} stroke={BLUE} /><path d="M84 6V30L60 44L64 60L46 66L54 92H68L72 58L96 36V6Z" {...b} strokeWidth="3" /><path d="M-4 0H28V32L12 56L-4 32Z" fill={ORANGE} /><circle cx="12" cy="17" r="8" fill={PAPER} /><circle cx="86" cy="84" r="15" fill={ORANGE} /><circle cx="96" cy="58" r="9" fill={ORANGE} /></V> },
  { name: "Power Apps", icon: <V><path d="M14 78H10C4 78 4 74 4 70V30C4 22 8 18 16 18H84C92 18 96 22 96 30V70C96 74 96 78 90 78" stroke={DARK} /><path d="M36 44L58 66L36 88L14 66Z" fill={DARK} /><path d="M36 57L45 66L36 75L27 66Z" fill={PAPER} /><path d="M62 42L71 50L62 58L54 50ZM78 52L87 60L78 68L70 60ZM62 64L71 72L62 80L54 72ZM78 70L87 79L78 88L70 79Z" fill={DARK} /></V> },
  { name: "More visuals", icon: <V><g fill="#252423"><circle cx="14" cy="40" r="5.500" /><circle cx="50" cy="40" r="5.500" /><circle cx="86" cy="40" r="5.500" /></g></V> },
];

function SlicerTile() {
  return (
    <>
      <span className="absolute -top-[7px] -left-[6px] flex size-[46px] items-center justify-center rounded-[3px] border-2 border-[#4a8cf7] bg-[#605e5c]">
        <svg viewBox="0 0 126 126" className="size-10" fill="none" strokeWidth="6" aria-hidden="true">
          <path d="M6 6H120V120H6Z" fill={SILVER} />
          <path d="M10 12H108V108H10Z" fill={PAPER} stroke={DARK} />
          <path d="M13 15H105V26H13Z" fill={SILVER} />
          <path d="M10 28H108" stroke={DARK} />
          <path d="M30 46H46V62H30ZM30 74H46V90H30Z" fill={SILVER} stroke={GREY} />
          <path d="M54 56H120V84L104 96V120H72V96L54 80Z" fill={SILVER} />
          <path d="M62 66H112V76L96 92V112H80V92L62 76Z" fill={PAPER} stroke={DARK} />
        </svg>
      </span>
      <span className="pointer-events-none absolute -top-[17px] -left-4 z-20 h-[68px] w-[65px] border-2 border-[#ff0000]" />
      <span role="tooltip" className="absolute bottom-[62px] -left-[55px] z-10 flex h-20 w-[109px] items-center justify-center bg-white text-[23px] font-bold text-[#484644] shadow-[0_8px_48px_rgba(0,0,0,0.22)]">
        Slicer
        <svg viewBox="0 0 26 13" className="absolute top-20 left-14 h-[13px] w-[26px]" fill="#ffffff" aria-hidden="true"><path d="M0 0H26L13 13Z" /></svg>
      </span>
    </>
  );
}

const Cross = () => (
  <svg viewBox="0 0 16 16" className="size-4" fill="none" stroke="#252423" strokeWidth="1.500" aria-hidden="true"><path d="M0 0L16 16M16 0L0 16" /></svg>
);

function Visualizations() {
  return (
    <aside className="w-[362px] shrink-0 border-l-2 border-[#dededd] bg-[#f3f2f1] text-[22px] text-[#252423]">
      <div className="flex h-[107px] items-start justify-between pt-[29px] pr-[25px] pl-6">
        <h2 className="text-[30px] leading-10 font-semibold text-[#484644]">Visualizations</h2>
        <button type="button" aria-label="Collapse" className="mt-1.5"><ChevronRight size="h-6 w-3.5" /></button>
      </div>
      <div className="grid w-max grid-cols-6 gap-x-[23px] gap-y-[15px] pl-[19px]">
        {gallery.map(({ name, icon }) => (
          <button type="button" key={name} aria-label={name} className="relative size-[33px]">
            {icon ?? <SlicerTile />}
          </button>
        ))}
      </div>
      <div className="mt-2 h-0.5 bg-[#dededd]" />
      <div className="flex pl-6">
        <button type="button" aria-label="Fields" className="flex w-20 flex-col items-center pt-[15px]">
          <svg viewBox="0 0 40 40" className="size-10" fill="none" stroke="#252423" strokeWidth="2"><path d="M0 2H32" /><path d="M1 8H39V19H1ZM1 26H39V38H1Z" strokeDasharray="4 3" /></svg>
          <span className="mt-2 h-2 w-full rounded-full bg-[#f2c811]" />
        </button>
        <button type="button" aria-label="Format" className="flex w-20 flex-col items-center pt-[15px]">
          <svg viewBox="0 0 40 40" className="size-10" fill="none" stroke="#252423" strokeWidth="2"><rect x="3" y="2" width="29" height="8" rx="1" /><path d="M32 6H38V16H20V22M16 22H24V40H16Z" /></svg>
        </button>
        <button type="button" aria-label="Analytics" className="flex w-20 flex-col items-center pt-[15px]">
          <svg viewBox="0 0 40 40" className="size-10" fill="none" stroke="#252423" strokeWidth="2"><circle cx="17" cy="17" r="16" /><path d="M28 28L40 40M2 18L9 14L15 18L30 9M9 22V30M15 22V33M21 22V32M27 18V28" /></svg>
        </button>
      </div>
      <h3 className="mt-[9px] pl-6 leading-9">Field</h3>
      <div className="relative mt-2 mr-3 ml-2 rounded-[4px] border-2 border-dashed border-[#c8c6c4] bg-white px-1 pt-1.5 pb-[18px]">
        <ul className="rounded-[3px] border-2 border-[#c8c6c4] bg-[#edebe9] pt-1 pr-2 pl-[9px]">
          <li className="flex h-10 items-center">
            <span className="flex-1">Date</span>
            <button type="button" aria-label="Date menu" className="mr-3"><svg viewBox="0 0 24 12" className="h-3 w-6" fill="none" stroke="#252423" strokeWidth="1.500"><path d="M1 0L12 11L23 0" /></svg></button>
            <button type="button" aria-label="Remove Date"><Cross /></button>
          </li>
          {["Year", "Quarter", "Month", "Day"].map((f) => (
            <li key={f} className="flex h-[38px] items-center justify-between pl-4">
              {f}
              <button type="button" aria-label={`Remove ${f}`}><Cross /></button>
            </li>
          ))}
        </ul>
        <div className="pointer-events-none absolute -top-5 -right-[23px] -bottom-1.5 -left-[15px] z-10 border-2 border-[#ff0000]" />
      </div>
      <h2 className="mt-[27px] pl-7 text-[30px] leading-10 font-semibold text-[#484644]">Drill through</h2>
    </aside>
  );
}

/* ---------- fields pane ---------- */

const Globe = () => (
  <svg viewBox="0 0 26 26" className="size-[26px]" fill="#fff" stroke="#252423" strokeWidth="1.600" aria-hidden="true">
    <circle cx="13" cy="13" r="11" />
    <ellipse cx="13" cy="13" rx="5.500" ry="11" fill="none" />
    <path d="M3 9C8 11 18 11 23 9M3 17C8 15 18 15 23 17" fill="none" />
  </svg>
);

const SumColumn = () => (
  <svg viewBox="0 0 26 26" className="size-[26px]" fill="none" aria-hidden="true">
    <path d="M0 1H26V25H0Z" fill="#252423" />
    <path d="M2 7H8V23H2Z" fill={SILVER} />
    <path d="M10 7H24V11H10ZM10 13H24V23H10Z" fill="#eca067" />
    <path d="M17 5V8" stroke="#252423" strokeWidth="2" />
    <path d="M24 12H15L20 17L15 23H24" stroke="#605e5c" strokeWidth="2.500" />
  </svg>
);

const Calculator = () => (
  <svg viewBox="0 0 26 26" className="size-[26px]" aria-hidden="true">
    <rect x="4" y="1" width="18" height="24" rx="1" fill="#252423" />
    <path d="M8 5H18V9H8ZM8 12H10V14H8ZM12 12H14V14H12ZM16 12H18V14H16ZM8 16H10V18H8ZM12 16H14V18H12ZM16 16H18V18H16ZM8 20H10V22H8ZM12 20H14V22H12ZM16 20H18V22H16Z" fill="#fff" />
  </svg>
);

const Calendar = () => (
  <svg viewBox="0 0 26 26" className="size-[26px]" aria-hidden="true">
    <path d="M3 3H25V25H3Z" fill="#fff" stroke="#252423" strokeWidth="2" />
    <path d="M3 8H25M7 0V5M20 0V5" stroke="#252423" strokeWidth="2" />
    <path d="M6 12H10V16H6ZM12 12H16V16H12ZM18 12H22V16H18ZM6 18H10V22H6ZM12 18H16V22H12Z" fill="#252423" />
  </svg>
);

const TableGlyph = () => (
  <svg viewBox="0 0 26 26" className="size-[26px]" aria-hidden="true">
    <path d="M1 2H25V24H1Z" fill="#fff" stroke="#252423" strokeWidth="2" />
    <path d="M1 2H25V6H1Z" fill="#252423" />
    <path d="M1 12H25M1 18H25M9 6V24M17 6V24" stroke="#252423" strokeWidth="2" />
  </svg>
);

const Badge = () => (
  <svg viewBox="0 0 24 24" className="absolute top-3.5 left-3.5 size-6" fill="none" aria-hidden="true">
    <circle cx="12" cy="12" r="12" fill="#f2c811" />
    <path d="M7.500 12L11 15.500L16.500 9" stroke="#252423" strokeWidth="3" />
  </svg>
);

const fields: { name: string; icon: ReactNode; on?: boolean }[] = [
  { name: "County Name", icon: <Globe /> },
  { name: "Daily Confirmed Cases", icon: <SumColumn /> },
  { name: "Daily Deaths", icon: <SumColumn /> },
  { name: "Date", icon: <Calendar />, on: true },
  { name: "Fatality Rate", icon: <Calculator /> },
  { name: "State", icon: <Globe /> },
];

const Fold = ({ up }: { up?: boolean }) => (
  <svg viewBox="0 0 24 12" className="h-3 w-6" fill="none" stroke="#252423" strokeWidth="1.500" aria-hidden="true">
    <path d={up ? "M1 12L12 1L23 12" : "M1 0L12 11L23 0"} />
  </svg>
);

function Fields() {
  return (
    <aside className="w-[397px] shrink-0 border-l-2 border-[#dededd] bg-[#f3f2f1] text-[#252423]">
      <h2 className="h-[104px] pt-[29px] pl-[22px] text-[30px] leading-10 font-semibold text-[#484644]">Fields</h2>
      <SearchBox id="field-search" frame="ml-2 h-[60px] rounded-l-[3px] border-r-0 border-[#c8c6c4]" />
      <div className="mt-2 h-0.5 bg-[#dededd]" />
      <div className="mt-[18px] flex h-12 items-center pl-2 text-[23px] font-semibold">
        <button type="button" aria-label="Collapse table" className="mr-3.5"><Fold up /></button>
        <span className="relative mr-6"><TableGlyph /><Badge /></span>
        US Covid
      </div>
      <ul className="mt-[14px] text-[23px]">
        {fields.map(({ name, icon, on }) => (
          <li key={name} className="flex h-12 items-center pl-6">
            <span className="mr-4 flex w-6">{on && <button type="button" aria-label="Expand Date"><Fold /></button>}</span>
            <label className={`flex items-center whitespace-nowrap ${on ? "font-semibold" : ""}`}>
              <span className="relative mr-1.5 flex size-6">
                <input type="checkbox" defaultChecked={on} className="size-6 appearance-none rounded-[4px] border-2 border-[#797775] checked:border-[#f2c811] checked:bg-[#f2c811]" />
                {on && <svg viewBox="0 0 24 24" className="pointer-events-none absolute inset-0 size-6" fill="none" stroke="#252423" strokeWidth="1.800" aria-hidden="true"><path d="M6 12L10.500 16.500L18 8" /></svg>}
              </span>
              <span className="relative mr-[18px]">{icon}{on && <Badge />}</span>
              {name}
            </label>
          </li>
        ))}
      </ul>
    </aside>
  );
}

export default function App() {
  return (
    <div className="flex h-screen flex-col overflow-hidden bg-[#f3f2f1] font-['Open_Sans',sans-serif] text-[#252423]">
      <Ribbon />
      <div className="flex min-h-0 flex-1">
        <Rail />
        <Canvas />
        <Filters />
        <Visualizations />
        <Fields />
      </div>
    </div>
  );
}
